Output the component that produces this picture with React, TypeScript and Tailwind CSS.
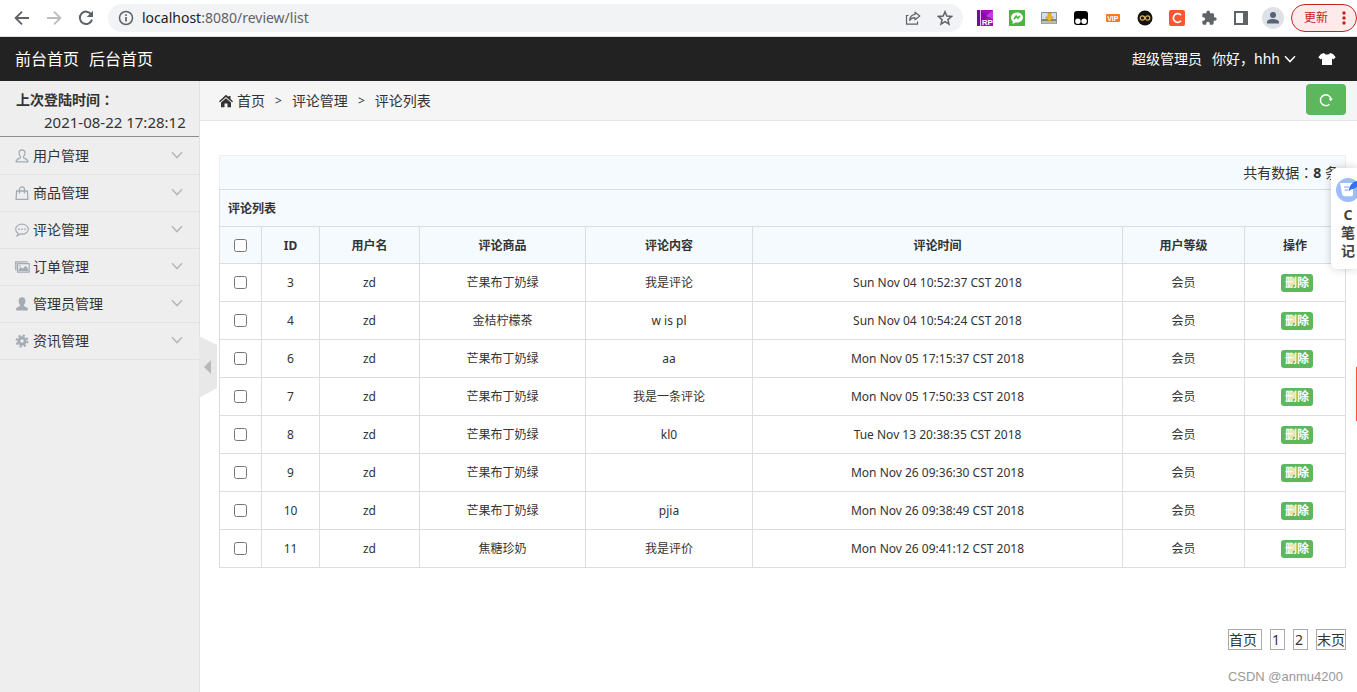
import React from 'react';

interface Review {
  id: number;
  user: string;
  product: string;
  content: string;
  time: string;
  level: string;
}

const reviews: Review[] = [
  { id: 3, user: 'zd', product: '芒果布丁奶绿', content: '我是评论', time: 'Sun Nov 04 10:52:37 CST 2018', level: '会员' },
  { id: 4, user: 'zd', product: '金桔柠檬茶', content: 'w is pl', time: 'Sun Nov 04 10:54:24 CST 2018', level: '会员' },
  { id: 6, user: 'zd', product: '芒果布丁奶绿', content: 'aa', time: 'Mon Nov 05 17:15:37 CST 2018', level: '会员' },
  { id: 7, user: 'zd', product: '芒果布丁奶绿', content: '我是一条评论', time: 'Mon Nov 05 17:50:33 CST 2018', level: '会员' },
  { id: 8, user: 'zd', product: '芒果布丁奶绿', content: 'kl0', time: 'Tue Nov 13 20:38:35 CST 2018', level: '会员' },
  { id: 9, user: 'zd', product: '芒果布丁奶绿', content: '', time: 'Mon Nov 26 09:36:30 CST 2018', level: '会员' },
  { id: 10, user: 'zd', product: '芒果布丁奶绿', content: 'pjia', time: 'Mon Nov 26 09:38:49 CST 2018', level: '会员' },
  { id: 11, user: 'zd', product: '焦糖珍奶', content: '我是评价', time: 'Mon Nov 26 09:41:12 CST 2018', level: '会员' },
];

// the TC face centres the full-width colon in its box
const Colon = () => (
  <span lang="zh-TW" className="leading-none font-['Noto_Sans_CJK_TC',sans-serif]">：</span>
);

const ChevronDown: React.FC<{ className?: string }> = ({ className }) => (
  <svg viewBox="0 0 12 12" className={className} fill="none" stroke="currentColor" strokeWidth="1.4">
    <path d="M1 3.2 6 8.6l5-5.4" />
  </svg>
);

const UserOutlineIcon = () => (
  <svg viewBox="0 0 14 14" className="w-3.5 h-3.5" fill="none" stroke="currentColor" strokeWidth="1.2" strokeLinejoin="round">
    <path d="M7 .9C5.100.9 4 2.200 4 4c0 1.500.6 2.700 1.500 3.500v1.300C4 9.500 1.300 9.900 1 12.900h12c-.3-3-3-3.400-4.500-4.100V7.500C9.400 6.700 10 5.500 10 4 10 2.200 8.900.9 7 .9z" />
  </svg>
);

const BagIcon = () => (
  <svg viewBox="0 0 14 14" className="w-3.5 h-3.5" fill="none" stroke="currentColor" strokeWidth="1.3">
    <path d="M1.600 5h10.800l.5 8.300H1.100z" />
    <path d="M4.500 7.500V3.400C4.500 2 5.500.9 7 .9s2.500 1.100 2.500 2.500v4.100" />
  </svg>
);

const CommentIcon = () => (
  <svg viewBox="0 0 14 14" className="w-3.5 h-3.5" fill="none" stroke="currentColor" strokeWidth="1.2">
    <path d="M7 1.200c3.500 0 6.300 2.200 6.300 5s-2.800 5-6.300 5c-.7 0-1.400-.1-2-.3-.7.9-1.700 1.600-3 1.900.6-.7.9-1.700.8-2.700C1.500 9.200.7 7.800.7 6.200c0-2.800 2.800-5 6.300-5z" />
    <path d="M3.200 6.300h1.600M6.200 6.300h1.600M9.200 6.300h1.600" strokeWidth="1.6" />
  </svg>
);

const PictureIcon = () => (
  <svg viewBox="0 0 15 12" className="w-[15px] h-3" fill="none" stroke="currentColor">
    <path d="M.8 9.500V.9h12" strokeWidth="1.4" />
    <path d="M2.600 2.700h11.600v8.500H2.600z" strokeWidth="1.2" />
    <path d="M3.800 10V8.200l2-2.200 2 1.800 2.700-3 2.700 3V10z" fill="currentColor" stroke="none" />
    <circle cx="5" cy="4.7" r=".8" fill="currentColor" stroke="none" />
  </svg>
);

const UserSolidIcon = () => (
  <svg viewBox="0 0 14 14" className="w-3.5 h-3.5" fill="currentColor">
    <path d="M7 .3C4.800.3 3.600 1.800 3.600 3.900c0 1.700.7 3.100 1.600 3.900-.1 1.100-.6 1.600-1.700 2C1.900 10.400 1 11.200 1 12.600c0 .6.300 1 .9 1h10.200c.6 0 .9-.4.9-1 0-1.400-.9-2.200-2.500-2.800-1.100-.4-1.600-.9-1.700-2 .9-.8 1.600-2.200 1.600-3.900C10.400 1.800 9.200.3 7 .3z" />
  </svg>
);

const GearIcon = () => (
  <svg viewBox="0 0 14 14" className="w-3.5 h-3.5" fill="none" stroke="currentColor">
    <circle cx="7" cy="7" r="3.2" strokeWidth="2.9" />
    <circle cx="7" cy="7" r="5.5" strokeWidth="2" strokeDasharray="2.2 2.12" />
  </svg>
);

const menus = [
  { label: '用户管理', icon: <UserOutlineIcon /> },
  { label: '商品管理', icon: <BagIcon /> },
  { label: '评论管理', icon: <CommentIcon /> },
  { label: '订单管理', icon: <PictureIcon /> },
  { label: '管理员管理', icon: <UserSolidIcon /> },
  { label: '资讯管理', icon: <GearIcon /> },
];

const BrowserBar = () => (
  <div className="h-[37px] flex items-center bg-white border-b border-[#dcdcdc] pl-3.5 text-[#5f6368]">
    <div className="flex items-center gap-4">
      <button aria-label="后退">
        <svg viewBox="0 0 16 16" className="w-4 h-4" fill="none" stroke="currentColor" strokeWidth="1.9"><path d="M15 8H2M8 1.600 1.600 8 8 14.400" /></svg>
      </button>
      <button aria-label="前进" className="text-[#babcbe]">
        <svg viewBox="0 0 16 16" className="w-4 h-4" fill="none" stroke="currentColor" strokeWidth="1.9"><path d="M1 8h13M8 1.600 14.400 8 8 14.400" /></svg>
      </button>
      <button aria-label="刷新">
        <svg viewBox="0 0 16 16" className="w-4 h-4" fill="none" stroke="currentColor" strokeWidth="2">
          <path d="M13.300 4.500A6.200 6.200 0 1 0 14 9.600" />
          <path d="M15 .8v6.300H8.700z" fill="currentColor" stroke="none" />
        </svg>
      </button>
    </div>
    <div className="flex-1 h-7 mx-3.5 px-2.5 flex items-center rounded-full bg-[#f1f3f4]">
      <svg viewBox="0 0 16 16" className="w-4 h-4" fill="none" stroke="currentColor" strokeWidth="1.5">
        <circle cx="8" cy="8" r="6.5" />
        <path d="M8 7v4.500M8 4.200v1.700" strokeWidth="1.7" />
      </svg>
      <span className="ml-2 flex-1 text-sm"><span className="text-[#202124]">localhost</span>:8080/review/list</span>
      <svg viewBox="0 0 16 16" className="w-4 h-4" fill="none" stroke="currentColor" strokeWidth="1.2">
        <path d="M3.500 5.500H1.500v8.700h11v-2.700" />
        <path d="M10 2.200 14.800 6 10 9.800V7.700c-2.500 0-4.200.8-5.400 2.800.3-3.600 2.300-5.700 5.400-6.100z" strokeLinejoin="round" />
      </svg>
      <svg viewBox="0 0 16 16" className="w-4 h-4 ml-4" fill="none" stroke="currentColor" strokeWidth="1.5">
        <path d="m8 1.800 1.800 4.300 4.700.4-3.600 3.100 1.100 4.600L8 11.700l-4 2.500 1.100-4.600-3.600-3.100 4.700-.4z" />
      </svg>
    </div>
    <div className="flex items-center gap-4">
      <svg viewBox="0 0 16 16" className="w-4 h-4">
        <path d="M0 0h16v16H0z" fill="#a10fc0" />
        <path d="M0 0h3v16H0z" fill="#7a0a9a" />
        <path d="M3 0h1v16H3z" fill="#e9b8f2" />
        <path d="M4 1l8 5-8 7z" fill="#8a0aa8" />
        <path d="M16 0v9L9 6z" fill="#c43be0" />
        <text x="4.8" y="14.8" fontSize="8" fontWeight="bold" fill="#fff" fontFamily="Liberation Sans, sans-serif">RP</text>
      </svg>
      <svg viewBox="0 0 16 16" className="w-4 h-4">
        <path d="M0 0h16v16H0z" fill="#4cb440" />
        <path d="M8 2.500c3.300 0 6 2.200 6 5s-2.700 5-6 5c-.5 0-1 0-1.400-.1L3.500 14l.4-2.600C2.700 10.500 2 9.100 2 7.500c0-2.800 2.700-5 6-5z" fill="#fff" />
        <path d="M5 9.300 7.200 6l1.700 2.200L11 5.700" stroke="#4cb440" strokeWidth="1.6" fill="none" />
      </svg>
      <svg viewBox="0 0 16 16" className="w-4 h-4">
        <path d="M.5 2.500h15v11H.5z" fill="#cfe0ee" stroke="#8a8f94" />
        <path d="M1 9h14v2H1z" fill="#7a8c6a" />
        <path d="M1 11h14v2.500H1z" fill="#b9bec3" />
        <path d="M7 3h3v4h2.500l-4 4.500-4-4.500H7z" fill="#f2b81c" stroke="#b58310" strokeWidth=".5" />
      </svg>
      <svg viewBox="0 0 16 16" className="w-4 h-4">
        <path d="M4 1h8a3 3 0 0 1 3 3v8a3 3 0 0 1-3 3H4a3 3 0 0 1-3-3V4a3 3 0 0 1 3-3z" fill="#000" />
        <circle cx="4.9" cy="11.3" r="2.7" fill="#fff" />
        <circle cx="11.1" cy="11.3" r="2.7" fill="#fff" />
      </svg>
      <svg viewBox="0 0 16 16" className="w-4 h-4">
        <rect x="1" y="4" width="14" height="8" rx="1" fill="#f87a1e" />
        <text x="2.2" y="10.6" fontSize="7" fontWeight="bold" fill="#fff" fontFamily="Liberation Sans, sans-serif">VIP</text>
      </svg>
      <svg viewBox="0 0 16 16" className="w-4 h-4" fill="none">
        <circle cx="8" cy="8" r="7.5" fill="#15130f" />
        <circle cx="5.4" cy="8" r="2.2" stroke="#d8b064" strokeWidth="1.2" />
        <circle cx="10.6" cy="8" r="2.2" stroke="#d8b064" strokeWidth="1.2" />
      </svg>
      <svg viewBox="0 0 16 16" className="w-4 h-4">
        <rect width="16" height="16" rx="2" fill="#fc5531" />
        <path d="M12 5.300A4.300 4.300 0 1 0 12 10.700" fill="none" stroke="#fff" strokeWidth="1.7" />
      </svg>
      <svg viewBox="0 0 24 24" className="w-4 h-4" fill="currentColor">
        <path d="M21 11h-1.500V7a2 2 0 0 0-2-2h-4V3.500a2.700 2.700 0 0 0-5.400 0V5H4a2 2 0 0 0-2 2v3.800h1.500a2.700 2.700 0 0 1 0 5.400H2V20a2 2 0 0 0 2 2h3.800v-1.500a2.700 2.700 0 0 1 5.400 0V22H17a2 2 0 0 0 2-2v-4h2a2.500 2.500 0 0 0 0-5z" />
      </svg>
      <svg viewBox="0 0 16 16" className="w-4 h-4" fill="none" stroke="currentColor">
        <path d="M2 2h12v12H2z" strokeWidth="2" />
        <path d="M12 2v12" strokeWidth="4" />
      </svg>
    </div>
    <div className="ml-[13px] w-[22px] h-[22px] rounded-full bg-[#dee1e6] flex items-center justify-center">
      <svg viewBox="0 0 14 14" className="w-3.5 h-3.5" fill="#566378"><circle cx="7" cy="4" r="3" /><path d="M1 12.500V11c0-2 4-3 6-3s6 1 6 3v1.500z" /></svg>
    </div>
    <button className="ml-[7px] h-7 w-[66px] pl-3 pr-2.5 flex items-center justify-between rounded-full border border-[#c5221f] bg-[#fcebea] text-[#c5221f] text-xs">
      更新
      <svg viewBox="0 0 4 16" className="w-1 h-4" fill="currentColor"><circle cx="2" cy="3" r="1.7" /><circle cx="2" cy="8" r="1.7" /><circle cx="2" cy="13" r="1.7" /></svg>
    </button>
  </div>
);

const Sidebar = () => (
  <aside className="relative w-[200px] shrink-0 bg-[#eee] border-r border-[#e2e2e2]">
    <div className="h-14 pt-2 pl-4 leading-[22px] border-b border-[#8d8d8d]">
      <b className="block">上次登陆时间<Colon /></b>
      <span className="block pl-7 text-[15px]">2021-08-22 17:28:12</span>
    </div>
    <ul className="pt-px">
      {menus.map((m) => (
        <li key={m.label} className="border-b border-[#e2e2e2]">
          <button className="w-full h-9 pl-[15px] pr-4 flex items-center text-left">
            <span className="w-[18px] text-[#a3abb5]">{m.icon}</span>
            <span className="flex-1">{m.label}</span>
            <ChevronDown className="w-3 h-3 mb-0.5 text-[#b6b6b6]" />
          </button>
        </li>
      ))}
    </ul>
    {/* collapse handle */}
    <button aria-label="收起菜单" className="absolute left-full top-[255px]">
      <svg viewBox="0 0 18 62" className="w-[18px] h-[62px]">
        <path d="M0 0l18 9v43L0 62z" fill="#e8e8e8" />
        <path d="M12 24v14l-7-7z" fill="#b8b8b8" />
      </svg>
    </button>
  </aside>
);

const ReviewTable = () => (
  <table className="w-full table-fixed border-collapse text-xs text-center [&_td]:border [&_td]:border-[#ddd] [&_th]:border [&_th]:border-[#ddd] [&_th]:pt-0.5 [&_td]:pt-px">
    <colgroup>
      <col className="w-[42px]" />
      <col className="w-[58px]" />
      <col className="w-[100px]" />
      <col className="w-[166px]" />
      <col className="w-[167px]" />
      <col className="w-[370px]" />
      <col className="w-[122px]" />
      <col className="w-[101px]" />
    </colgroup>
    <thead className="bg-[#f5fafe]">
      <tr className="h-[37px]">
        <th colSpan={8} className="px-2 text-left">评论列表</th>
      </tr>
      <tr className="h-[37px]">
        <th><input type="checkbox" aria-label="全选" className="block mx-auto mb-0.5 w-[13px] h-[13px]" /></th>
        <th>ID</th>
        <th>用户名</th>
        <th>评论商品</th>
        <th>评论内容</th>
        <th>评论时间</th>
        <th>用户等级</th>
        <th>操作</th>
      </tr>
    </thead>
    <tbody>
      {reviews.map((r) => (
        <tr key={r.id} className="h-[38px]">
          <td><input type="checkbox" aria-label={`选择 ${r.id}`} className="block mx-auto mb-0.5 w-[13px] h-[13px]" /></td>
          <td>{r.id}</td>
          <td>{r.user}</td>
          <td>{r.product}</td>
          <td>{r.content}</td>
          <td>{r.time}</td>
          <td>{r.level}</td>
          <td>
            <button className="block ml-9 h-[18px] px-1 rounded-[3px] bg-[#5cb85c] text-white font-bold leading-[18px]">删除</button>
          </td>
        </tr>
      ))}
    </tbody>
  </table>
);

const App: React.FC = () => {
  return (
    <div className="relative min-h-screen flex flex-col bg-white overflow-hidden text-sm text-[#333] font-['Noto_Sans','Noto_Sans_CJK_SC',sans-serif]">
      <BrowserBar />

      <header className="h-11 px-[15px] flex items-center justify-between bg-[#222] text-white">
        <nav className="flex gap-2.5 text-base">
          <a href="#front">前台首页</a>
          <a href="#admin">后台首页</a>
        </nav>
        <div className="flex items-center pr-1.5">
          <span>超级管理员</span>
          <button className="ml-2.5 flex items-center gap-1">
            你好，hhh
            <ChevronDown className="w-3 h-3" />
          </button>
          <button aria-label="换肤" className="ml-[22px]">
            <svg viewBox="0 0 18 14" className="w-[18px] h-3.5" fill="currentColor">
              <path d="M6 1c.6 1 1.700 1.600 3 1.600S11.400 2 12 1l3 .9 2.700 3.400-2.500 2.300-1.200-1V13H4V6.600l-1.200 1L.3 5.300 3 1.900z" />
            </svg>
          </button>
        </div>
      </header>

      <div className="flex-1 flex">
        <Sidebar />

        <main className="flex-1 min-w-0">
          <div className="h-10 pl-[19px] pr-[11px] flex items-center justify-between bg-[#f5f5f5] border-b border-[#e5e5e5]">
            <nav className="flex items-center">
              <svg viewBox="0 0 14 14" className="w-3.5 h-3.5 mr-1" fill="currentColor">
                <path d="M7 .8l2.500 2.300V2h2v3L14 7.300l-.9 1L7 2.900.9 8.300l-.9-1z" />
                <path d="M7 4.200l5 4.400v4.600H8.500V9.500h-3v3.700H2V8.600z" />
              </svg>
              <a href="#home">首页</a>
              <span className="mx-2.5 text-xs">&gt;</span>
              <span>评论管理</span>
              <span className="mx-2.5 text-xs">&gt;</span>
              <span>评论列表</span>
            </nav>
            <button aria-label="刷新列表" className="w-10 h-[31px] mb-0.5 flex items-center justify-center rounded bg-[#5cb85c] text-white">
              <svg viewBox="0 0 14 14" className="w-3.5 h-3.5" fill="none" stroke="currentColor" strokeWidth="1.5">
                <path d="M10.500 11.200A5.400 5.400 0 1 1 12.100 6" />
                <path d="M9.500 5.500h4.400l-2.100 2.700z" fill="currentColor" stroke="none" />
              </svg>
            </button>
          </div>

          <div className="pl-[19px] pr-[11px] pt-[34px]">
            <div className="h-[34px] px-1.5 flex items-center justify-end border border-b-0 border-[#eee] bg-[#f5fafe]">
              <span>共有数据<Colon /><strong>8</strong> 条</span>
            </div>
            <ReviewTable />
            <nav className="mt-[61px] flex justify-end gap-2 leading-[19px]">
              <a href="#first" className="border border-[#aaa] pr-1">首页</a>
              <a href="#1" className="border border-[#aaa] pl-px pr-1">1</a>
              <a href="#2" className="border border-[#aaa] pl-px pr-1">2</a>
              <a href="#last" className="border border-[#aaa]">末页</a>
            </nav>
            <p className="mt-[18px] pr-[3px] text-right text-[13px] text-[#999] font-['Liberation_Sans',sans-serif]">CSDN @anmu4200</p>
          </div>
        </main>
      </div>

      {/* floating note widget */}
      <div className="absolute right-0 top-[168px] w-[26px] h-[101px] pt-2.5 overflow-hidden rounded-l-md bg-white shadow-[0_0_8px_rgba(0,0,0,0.2)]">
        <div className="w-[34px] flex flex-col items-center font-bold leading-[18px] text-[#444]">
          <svg viewBox="0 0 24 24" className="w-6 h-6 mb-1">
            <circle cx="12" cy="12" r="12" fill="#9dbcf8" />
            <path d="M4 5h13v11.500c0 1-.6 1.700-1.500 1.700H8.500c-1.200 0-2.300-.8-2.300-2z" fill="#fff" />
            <path d="M8 9h5M8.500 12h4" stroke="#7ba2f3" strokeWidth="1.2" />
            <path d="M13 13c0-6 4-10 11-11-1 7-5 9-9 9.500z" fill="#2f73f6" />
          </svg>
          <span>C</span>
          <span>笔</span>
          <span>记</span>
        </div>
      </div>
      <div className="absolute right-0 top-[367px] w-px h-[54px] bg-[#fc5531] shadow-[0_0_8px_rgba(0,0,0,0.3)]"></div>
    </div>
  );
};

export default App;
